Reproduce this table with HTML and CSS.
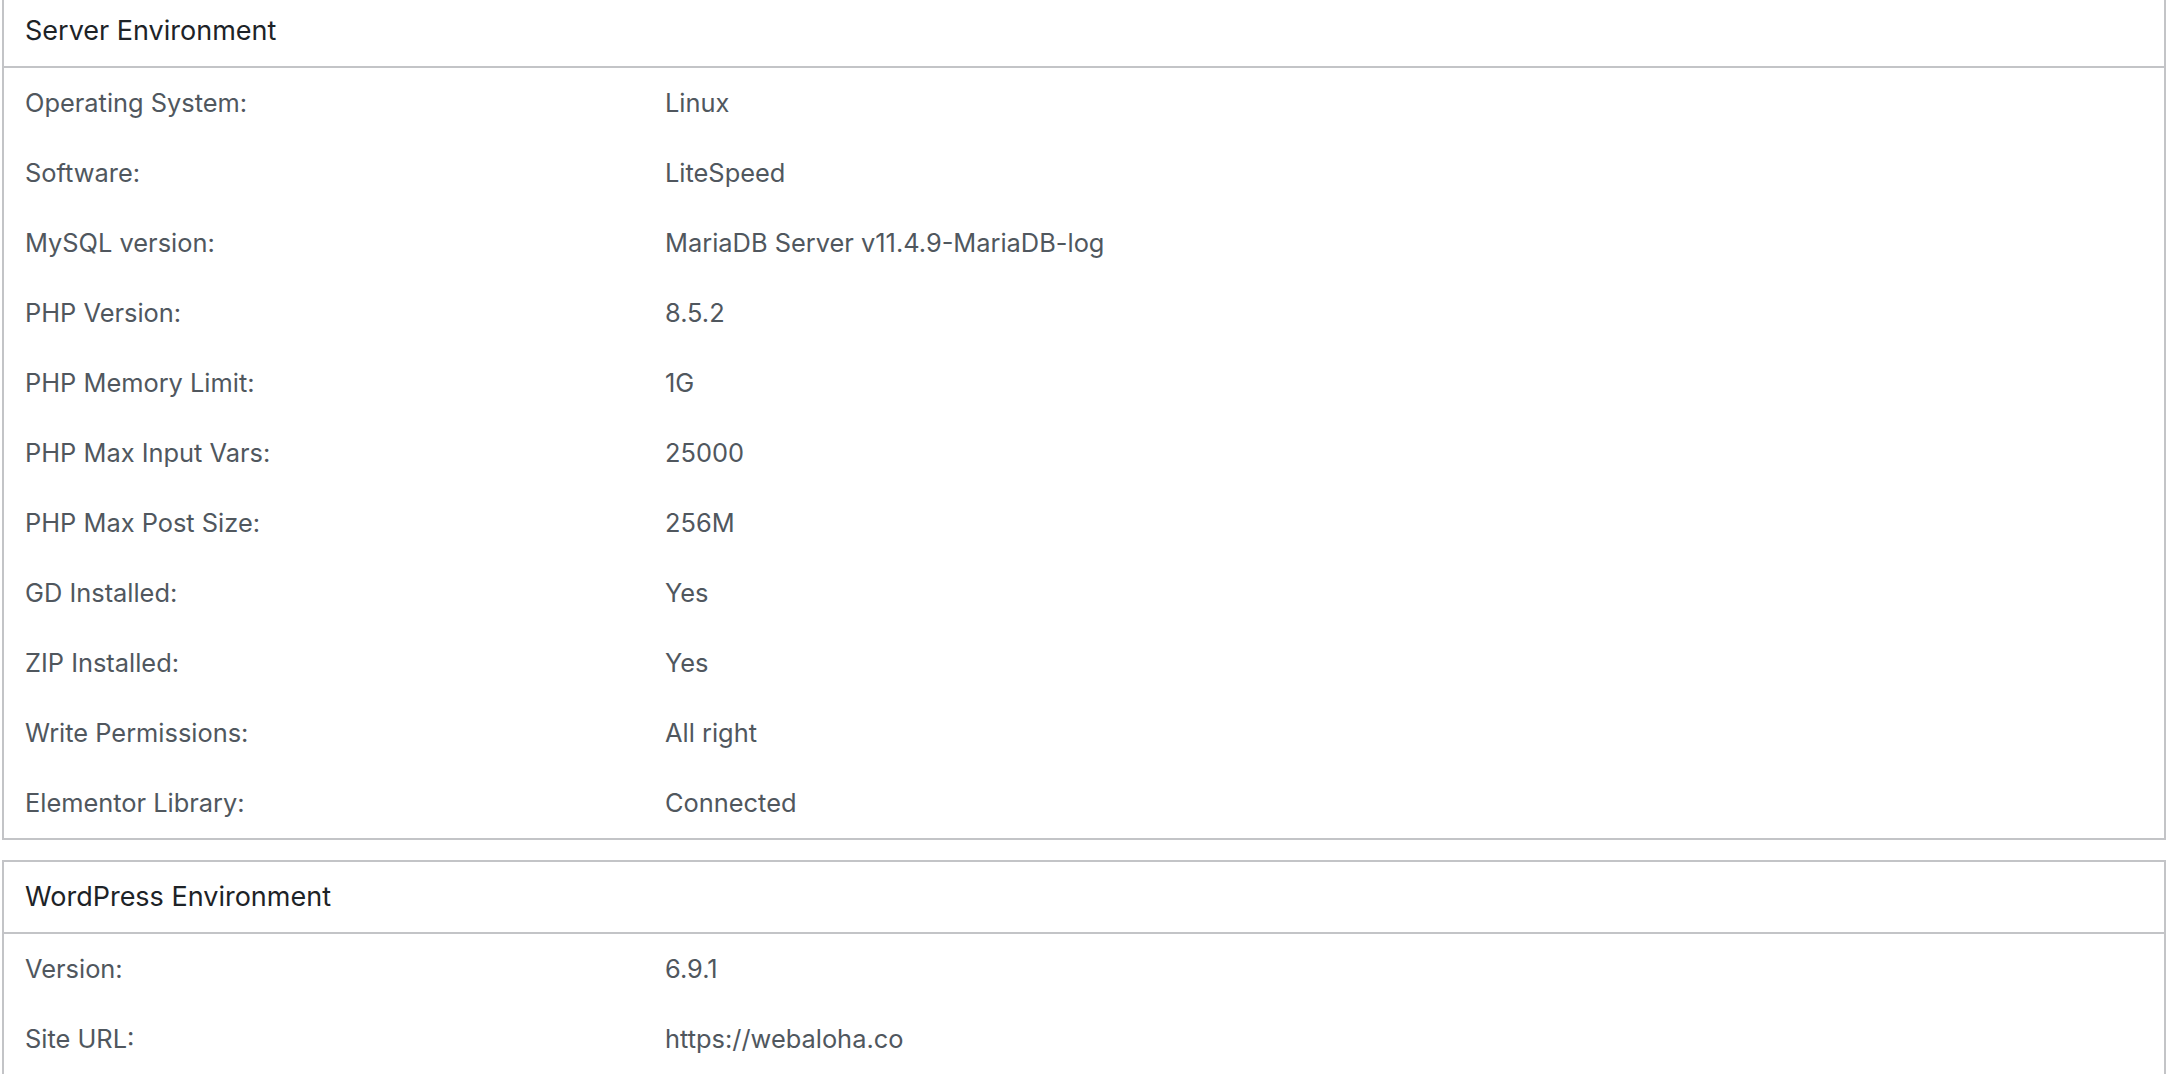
FILE: index.html
```html
<!DOCTYPE html>
<html lang="en">
<head>
<meta charset="utf-8">
<title>System Info</title>
<link rel="stylesheet" href="styles.css">
</head>
<body>
<div class="page">
  <section class="panel">
    <div class="panel-head">Server Environment</div>
    <div class="rows">
      <div class="label">Operating System:</div><div class="value">Linux</div>
      <div class="label">Software:</div><div class="value">LiteSpeed</div>
      <div class="label">MySQL version:</div><div class="value">MariaDB Server v11.4.9-MariaDB-log</div>
      <div class="label">PHP Version:</div><div class="value">8.5.2</div>
      <div class="label">PHP Memory Limit:</div><div class="value">1G</div>
      <div class="label">PHP Max Input Vars:</div><div class="value">25000</div>
      <div class="label">PHP Max Post Size:</div><div class="value">256M</div>
      <div class="label">GD Installed:</div><div class="value">Yes</div>
      <div class="label">ZIP Installed:</div><div class="value">Yes</div>
      <div class="label">Write Permissions:</div><div class="value">All right</div>
      <div class="label">Elementor Library:</div><div class="value">Connected</div>
    </div>
  </section>
  <section class="panel">
    <div class="panel-head">WordPress Environment</div>
    <div class="rows">
      <div class="label">Version:</div><div class="value">6.9.1</div>
      <div class="label">Site URL:</div><div class="value">https://webaloha.co</div>
    </div>
  </section>
</div>
</body>
</html>
```

FILE: styles.css
```css
html, body {
  margin: 0;
  padding: 0;
  background: #ffffff;
  overflow: hidden;
}

.page {
  margin-top: -6px;
  padding: 0 2px;
  display: flex;
  flex-direction: column;
  gap: 20px;
  font-family: Inter, "Liberation Sans", sans-serif;
  font-size: 25.4px;
}

.panel {
  border: 2px solid #c3c4c7;
  background: #fff;
}

.panel-head {
  height: 70px;
  line-height: 70px;
  padding-left: 21px;
  font-size: 27px;
  color: #1d2327;
  border-bottom: 2px solid #c3c4c7;
}

.rows {
  display: grid;
  grid-template-columns: 640px 1fr;
  grid-auto-rows: 70px;
}

.label,
.value {
  line-height: 70px;
  padding-left: 21px;
  color: #50575e;
  white-space: nowrap;
}
```
